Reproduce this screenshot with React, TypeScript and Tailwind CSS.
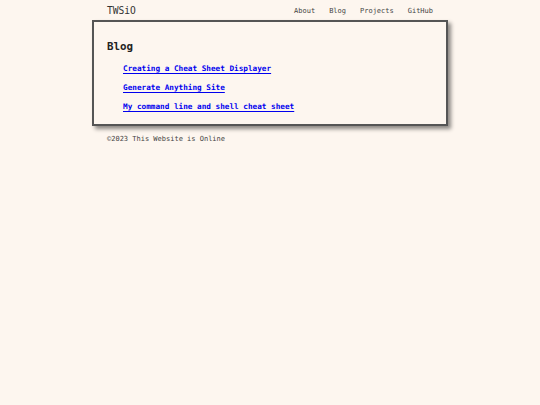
import React from "react";

export default function App() {
  const links = [
    "Creating a Cheat Sheet Displayer",
    "Generate Anything Site",
    "My command line and shell cheat sheet",
  ];
  return (
    <div
      className="min-h-[405px] w-full bg-[#fdf6ef] text-[#333]"
      style={{ fontFamily: '"DejaVu Sans Mono", monospace' }}
    >
      <div className="mx-auto w-[356px]">
        <header className="flex h-[20px] items-center justify-between px-[15px] pt-[1px]">
          <span className="text-[9.6px] leading-none text-[#333]">TWSiO</span>
          <nav className="flex gap-[14px] pt-[2px] text-[7px] leading-none text-[#444]">
            <span>About</span>
            <span>Blog</span>
            <span>Projects</span>
            <span>GitHub</span>
          </nav>
        </header>
        <main className="border-2 border-[#555] bg-[#fdf6ef] px-[13px] pt-[18px] pb-[8px] shadow-[3px_3px_4px_rgba(0,0,0,0.45)]">
          <h2 className="text-[10.8px] font-bold leading-[14px] text-[#222]">Blog</h2>
          <ul className="mt-[5px] pl-[16px]">
            {links.map((l) => (
              <li key={l} className="flex h-[19px] items-center">
                <a className="text-[7.7px] font-bold leading-none text-[#0000ee] underline underline-offset-2" href="#">
                  {l}
                </a>
              </li>
            ))}
          </ul>
        </main>
        <footer className="mt-[8px] px-[15px] text-[7px] leading-[10px] text-[#444]">
          ©2023 This Website is Online
        </footer>
      </div>
    </div>
  );
}
